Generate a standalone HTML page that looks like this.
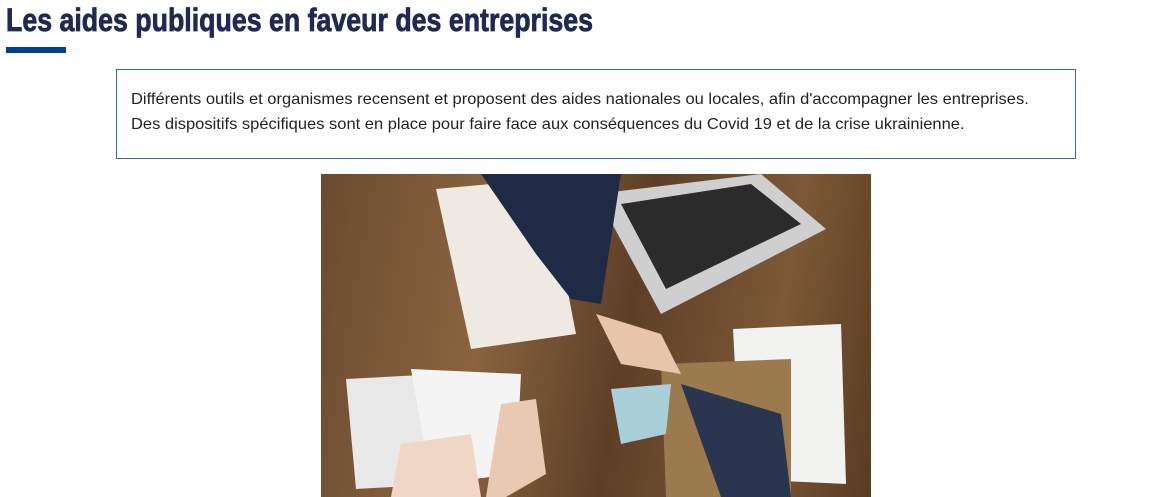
<!DOCTYPE html>
<html><head><meta charset="utf-8"><style>
body{margin:0;background:#fff;width:1173px;height:497px;overflow:hidden;position:relative;font-family:"Liberation Sans",sans-serif}
h1{position:absolute;left:6px;top:0;margin:0;font-family:"Liberation Sans Narrow","Liberation Sans",sans-serif;font-weight:bold;font-size:32px;line-height:40px;color:#1e2a55;white-space:nowrap;transform-origin:0 0;-webkit-text-stroke:0.8px #1e2a55}
.bar{position:absolute;left:6px;top:47px;width:60px;height:6px;background:#003f97}
.box{position:absolute;left:116px;top:69px;width:958px;height:88px;border:1px solid #2f6aa6}
.box p{margin:0;position:absolute;left:14px;top:17px;font-size:16px;line-height:25px;color:#222;white-space:nowrap;transform-origin:0 0}
.img{position:absolute;left:321px;top:174px;width:550px;height:323px;overflow:hidden;background:linear-gradient(100deg,#6b4a2e,#8a6440 30%,#5e3f26 55%,#7c5836 80%,#5a3b22)}
</style></head><body>
<h1 id="t">Les aides publiques en faveur des entreprises</h1>
<div class="bar"></div>
<div class="box"><p id="p">Différents outils et organismes recensent et proposent des aides nationales ou locales, afin d'accompagner les entreprises.<br>Des dispositifs spécifiques sont en place pour faire face aux conséquences du Covid 19 et de la crise ukrainienne.</p></div>
<div class="img">
<svg width="550" height="323" viewBox="0 0 550 323">
<polygon points="115,15 225,5 255,160 150,175" fill="#eeeae2"/>
<polygon points="275,20 440,0 505,55 340,140" fill="#cfcfcf"/>
<polygon points="300,30 430,10 480,50 345,115" fill="#2b2b2b"/>
<polygon points="160,0 300,0 280,130 250,125 215,80" fill="#1f2b44"/>
<polygon points="412,155 520,150 525,310 420,305" fill="#f2f2f0"/>
<polygon points="340,190 470,185 470,323 345,323" fill="#9b7a4e"/>
<polygon points="360,210 460,240 470,323 400,323" fill="#2a3550"/>
<polygon points="290,215 350,210 345,260 300,270" fill="#a9cfd8"/>
<polygon points="25,205 120,200 125,310 35,315" fill="#e8e8e8"/>
<polygon points="90,195 200,200 195,300 110,310" fill="#f4f4f4"/>
<polygon points="275,140 340,160 360,200 300,190" fill="#e8c4a8"/>
<polygon points="80,270 150,260 160,323 70,323" fill="#f0d6c4"/>
<polygon points="180,230 215,225 225,300 185,323 165,323" fill="#e9c9b2"/>
</svg>
</div>
<script>
var t=document.getElementById('t');var w=t.getBoundingClientRect().width;t.style.transform='scaleX('+(587/w)+')';
var p=document.getElementById('p');var r=document.createRange();r.selectNodeContents(p);var pw=p.scrollWidth;p.style.transform='scaleX('+(898/pw)+')';
</script>
</body></html>
